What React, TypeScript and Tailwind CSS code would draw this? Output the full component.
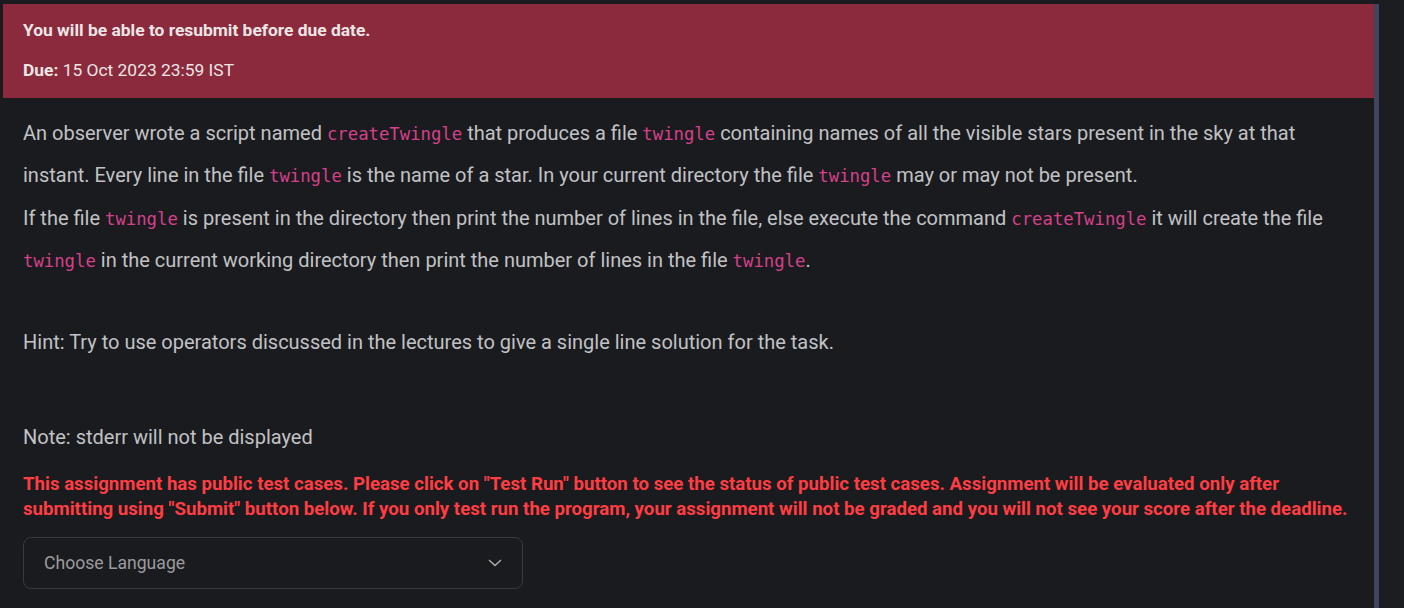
import React from 'react';

const Code = ({ children }: { children: React.ReactNode }) => (
  <code className="font-['DejaVu_Sans_Mono',monospace] text-[17.3px] leading-none text-[#d6408b]">{children}</code>
);

const App = () => {
  return (
    <div className="flex h-[608px] w-full overflow-hidden bg-[#1a1b1e] font-['Roboto',sans-serif]">
      <div className="flex-1 pl-[3px] pt-[4px]">
        {/* due banner */}
        <div className="h-[94px] bg-[#8a2a3c] px-5 pt-[14px] text-[17.4px] leading-6 text-[#ece6e6]">
          <p className="font-bold">You will be able to resubmit before due date.</p>
          <p className="mt-4">
            <span className="font-bold">Due:</span> 15 Oct 2023 23:59 IST
          </p>
        </div>

        <div className="px-5 text-[20px] text-[#c1c2c5]">
          <p className="mt-[14px] leading-[42.4px]">
            An observer wrote a script named <Code>createTwingle</Code> that produces a file <Code>twingle</Code> containing
            names of all the visible stars present in the sky at that instant. Every line in the file <Code>twingle</Code> is
            the name of a star. In your current directory the file <Code>twingle</Code> may or may not be present.
            <br />
            If the file <Code>twingle</Code> is present in the directory then print the number of lines in the file, else
            execute the command <Code>createTwingle</Code> it will create the file <Code>twingle</Code> in the current working
            directory then print the number of lines in the file <Code>twingle</Code>.
          </p>

          <p className="mt-[39px] leading-[42.4px]">
            Hint: Try to use operators discussed in the lectures to give a single line solution for the task.
          </p>

          <p className="mt-[53px] leading-[42.4px]">Note: stderr will not be displayed</p>

          <p className="mt-[14px] text-[18.65px] font-bold leading-[25px] text-[#ff3d42]">
            This assignment has public test cases. Please click on "Test Run" button to see the status of public test cases.
            Assignment will be evaluated only after submitting using "Submit" button below. If you only test run the program,
            your assignment will not be graded and you will not see your score after the deadline.
          </p>

          <button
            type="button"
            className="mt-[15px] flex h-[52px] w-[500px] items-center justify-between rounded-lg border border-[#373a40] bg-[#1a1b1e] pl-5 pr-5 text-left text-[17.6px] text-[#9a9b9e]"
          >
            <span>Choose Language</span>
            <svg width="14" height="8" viewBox="0 0 14 8" fill="none" stroke="#b0b0b0" strokeWidth="1.4">
              <path d="M1 1 L7 6.5 L13 1" />
            </svg>
          </button>
        </div>
      </div>

      {/* scrollbar */}
      <div className="mt-[4px] w-[5px] bg-[#3f4461]" />
      <div className="w-[25px] bg-[#1c1d20]" />
    </div>
  );
};

export default App;
